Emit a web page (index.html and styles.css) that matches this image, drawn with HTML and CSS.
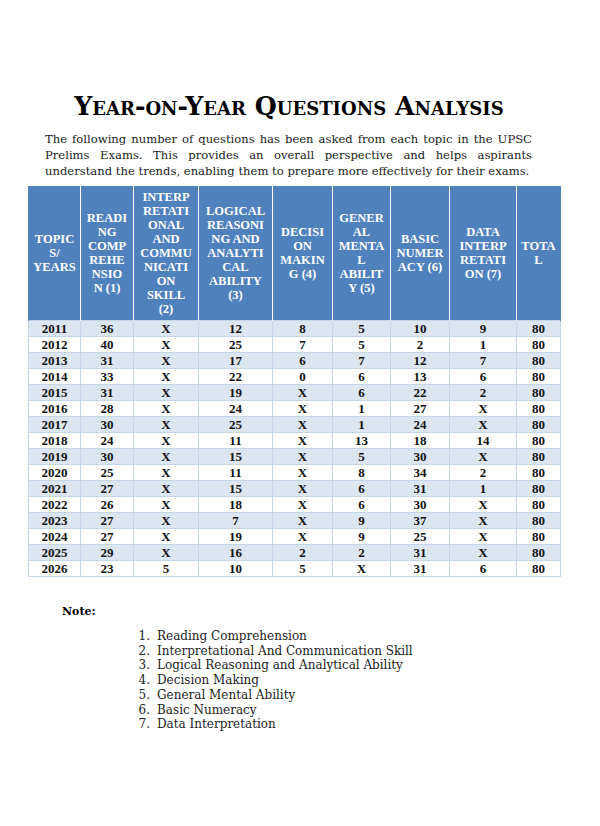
FILE: index.html
```html
<!DOCTYPE html>
<html>
<head>
<meta charset="utf-8">
<link rel="stylesheet" href="styles.css">
</head>
<body>
<div class="page">
  <h1 class="title">Year-on-Year Questions Analysis</h1>
  <p class="intro"><span class="line">The following number of questions has been asked from each topic in the UPSC</span> <span class="line">Prelims Exams. This provides an overall perspective and helps aspirants</span> <span class="line last">understand the trends, enabling them to prepare more effectively for their exams.</span></p>
  <table class="grid">
    <colgroup>
      <col style="width:52px"><col style="width:53px"><col style="width:65px"><col style="width:74px"><col style="width:60px"><col style="width:58px"><col style="width:59px"><col style="width:67px"><col style="width:44px">
    </colgroup>
    <thead>
      <tr>
        <th>TOPIC<br>S/<br>YEARS</th>
        <th>READI<br>NG<br>COMP<br>REHE<br>NSIO<br>N (1)</th>
        <th>INTERP<br>RETATI<br>ONAL<br>AND<br>COMMU<br>NICATI<br>ON<br>SKILL<br>(2)</th>
        <th>LOGICAL<br>REASONI<br>NG AND<br>ANALYTI<br>CAL<br>ABILITY<br>(3)</th>
        <th>DECISI<br>ON<br>MAKIN<br>G (4)</th>
        <th>GENER<br>AL<br>MENTA<br>L<br>ABILIT<br>Y (5)</th>
        <th>BASIC<br>NUMER<br>ACY (6)</th>
        <th>DATA<br>INTERP<br>RETATI<br>ON (7)</th>
        <th>TOTA<br>L</th>
      </tr>
    </thead>
    <tbody>
      <tr><td>2011</td><td>36</td><td>X</td><td>12</td><td>8</td><td>5</td><td>10</td><td>9</td><td>80</td></tr>
      <tr><td>2012</td><td>40</td><td>X</td><td>25</td><td>7</td><td>5</td><td>2</td><td>1</td><td>80</td></tr>
      <tr><td>2013</td><td>31</td><td>X</td><td>17</td><td>6</td><td>7</td><td>12</td><td>7</td><td>80</td></tr>
      <tr><td>2014</td><td>33</td><td>X</td><td>22</td><td>0</td><td>6</td><td>13</td><td>6</td><td>80</td></tr>
      <tr><td>2015</td><td>31</td><td>X</td><td>19</td><td>X</td><td>6</td><td>22</td><td>2</td><td>80</td></tr>
      <tr><td>2016</td><td>28</td><td>X</td><td>24</td><td>X</td><td>1</td><td>27</td><td>X</td><td>80</td></tr>
      <tr><td>2017</td><td>30</td><td>X</td><td>25</td><td>X</td><td>1</td><td>24</td><td>X</td><td>80</td></tr>
      <tr><td>2018</td><td>24</td><td>X</td><td>11</td><td>X</td><td>13</td><td>18</td><td>14</td><td>80</td></tr>
      <tr><td>2019</td><td>30</td><td>X</td><td>15</td><td>X</td><td>5</td><td>30</td><td>X</td><td>80</td></tr>
      <tr><td>2020</td><td>25</td><td>X</td><td>11</td><td>X</td><td>8</td><td>34</td><td>2</td><td>80</td></tr>
      <tr><td>2021</td><td>27</td><td>X</td><td>15</td><td>X</td><td>6</td><td>31</td><td>1</td><td>80</td></tr>
      <tr><td>2022</td><td>26</td><td>X</td><td>18</td><td>X</td><td>6</td><td>30</td><td>X</td><td>80</td></tr>
      <tr><td>2023</td><td>27</td><td>X</td><td>7</td><td>X</td><td>9</td><td>37</td><td>X</td><td>80</td></tr>
      <tr><td>2024</td><td>27</td><td>X</td><td>19</td><td>X</td><td>9</td><td>25</td><td>X</td><td>80</td></tr>
      <tr><td>2025</td><td>29</td><td>X</td><td>16</td><td>2</td><td>2</td><td>31</td><td>X</td><td>80</td></tr>
      <tr><td>2026</td><td>23</td><td>5</td><td>10</td><td>5</td><td>X</td><td>31</td><td>6</td><td>80</td></tr>
    </tbody>
  </table>
  <div class="note">
    <p class="note-label">Note:</p>
    <ol class="note-list">
      <li>Reading Comprehension</li>
      <li>Interpretational And Communication Skill</li>
      <li>Logical Reasoning and Analytical Ability</li>
      <li>Decision Making</li>
      <li>General Mental Ability</li>
      <li>Basic Numeracy</li>
      <li>Data Interpretation</li>
    </ol>
  </div>
</div>
</body>
</html>
```

FILE: styles.css
```css
html, body {
  margin: 0;
  padding: 0;
  background: #ffffff;
}
.page {
  width: 600px;
  padding-top: 91px;
  font-family: "DejaVu Serif", "Liberation Serif", serif;
  color: #1a1a1a;
}
.title {
  margin: 0;
  text-align: center;
  padding-right: 22px;
  font-family: "DejaVu Serif", serif;
  font-weight: bold;
  font-variant: small-caps;
  font-size: 25.3px;
  line-height: 31px;
  letter-spacing: 0;
  color: #000;
}
.intro {
  margin: 9px 68px 0 45px;
  font-family: "DejaVu Serif", serif;
  font-size: 11.6px;
  line-height: 16px;
  color: #222;
}
.intro .line {
  display: block;
  white-space: nowrap;
  text-align: justify;
  text-align-last: justify;
}
.intro .line.last {
  text-align: left;
  text-align-last: left;
}
.grid {
  margin: 7px 0 0 28px;
  width: 532px;
  table-layout: fixed;
  border-collapse: collapse;
  font-family: "Liberation Serif", serif;
  font-weight: bold;
}
.grid th {
  background: #4f81bd;
  color: #ffffff;
  font-size: 12.5px;
  line-height: 14px;
  height: 134px;
  padding: 0;
  border-left: 1px solid #ffffff;
  border-right: 1px solid #ffffff;
  vertical-align: middle;
  text-align: center;
}
.grid th:first-child { border-left: 1px solid #4f81bd; }
.grid th:last-child { border-right: 1px solid #4f81bd; }
.grid td {
  height: 15px;
  padding: 0;
  font-size: 13px;
  line-height: 15px;
  text-align: center;
  color: #111;
  border: 1px solid #c5d6ea;
}
.grid tbody tr:nth-child(odd) td {
  background: #dce6f1;
}
.note {
  padding-top: 28px;
}
.note-label {
  margin: 0 0 11px 62px;
  font-size: 11px;
  font-weight: bold;
  color: #000;
}
.note-list {
  margin: 0;
  padding: 0 0 0 138px;
  list-style: none;
  counter-reset: item;
  font-size: 12px;
  line-height: 14.7px;
  color: #222;
}
.note-list li {
  counter-increment: item;
  display: flex;
}
.note-list li::before {
  content: counter(item) ".";
  width: 12px;
  margin-right: 7px;
  text-align: right;
}
```
